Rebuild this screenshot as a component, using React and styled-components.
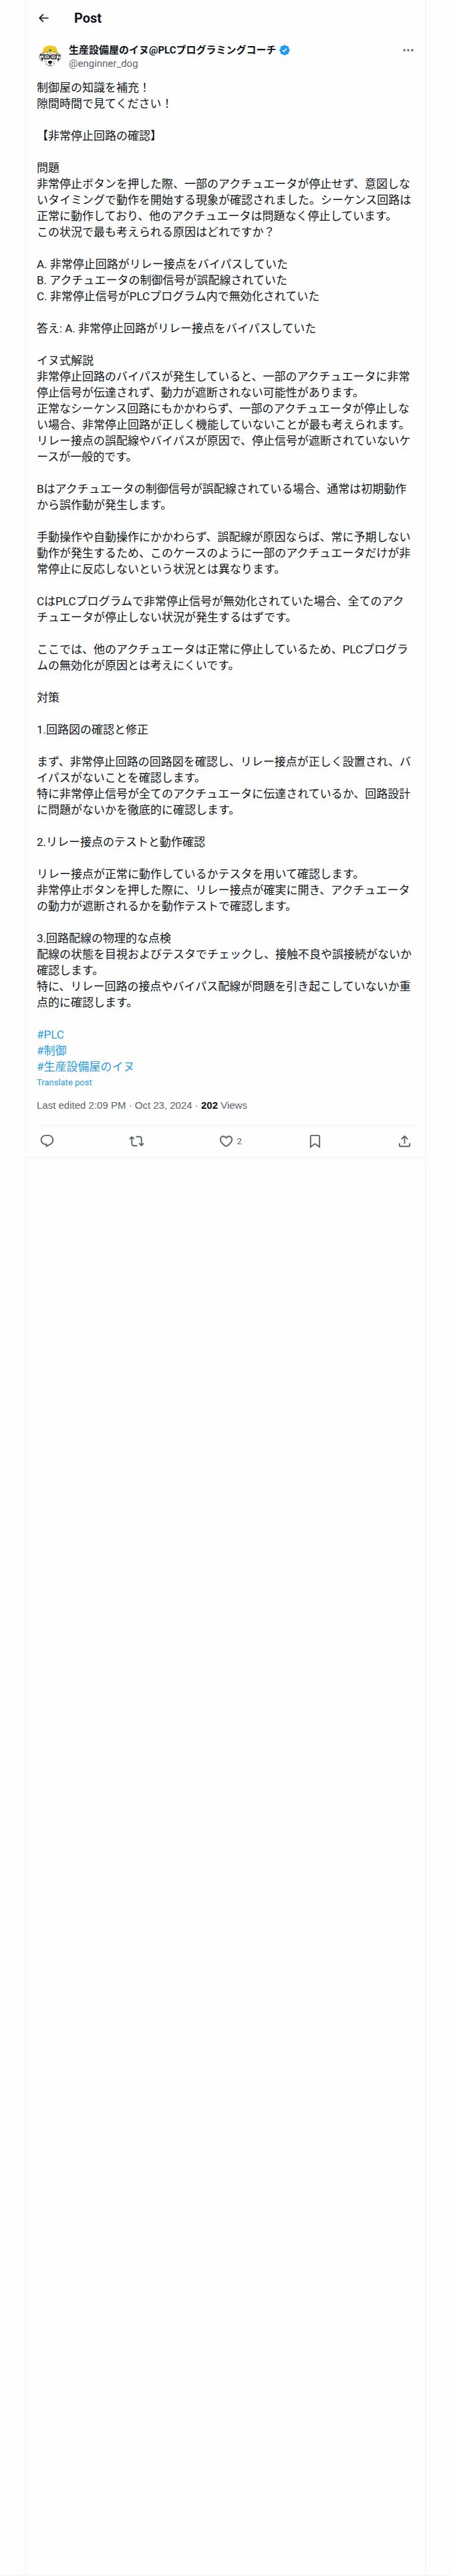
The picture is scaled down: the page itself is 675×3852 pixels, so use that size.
import React from "react";
import styled, { createGlobalStyle } from "styled-components";

const muted = "#5a646a";
const accent = "#2a9bdd";
const line = "#eff2f3";

const GlobalStyle = createGlobalStyle`
  *, *::before, *::after { box-sizing: border-box; }
  body {
    margin: 0;
    background: #fefefe;
    color: #0f1419;
    font-family: Roboto, "Noto Sans CJK JP", sans-serif;
    font-size: 15px;
    line-height: 20px;
  }
`;

const Page = styled.div`
  display: flex;
  min-height: 100vh;
  padding: 0 37px 0 38px;
  border-bottom: 2px solid #f7f7f7;
`;

const Column = styled.main`
  flex: 1;
  min-width: 0;
  border: solid ${line};
  border-width: 0 1px;
`;

const Header = styled.header`
  display: flex;
  align-items: center;
  gap: 36px;
  height: 53px;
  padding: 0 16px;
`;

const IconButton = styled.button`
  display: flex;
  align-items: center;
  gap: 5px;
  padding: 0;
  border: 0;
  background: none;
  color: ${(p) => p.$color || muted};
  font: inherit;
  font-size: 13px;
  cursor: pointer;
`;

const ActionButton = styled(IconButton)`
  width: 23px;
  white-space: nowrap;
`;

const Icon = styled.svg`
  display: block;
  flex: none;
  width: ${(p) => p.$size}px;
  height: ${(p) => p.$size}px;
  fill: currentColor;
`;

const Title = styled.h1`
  margin: 0;
  font-size: 20px;
  line-height: 24px;
  font-weight: 700;
`;

const Article = styled.article`
  padding: 12px 16px 0;
  border-bottom: 1px solid ${line};
`;

const Author = styled.div`
  display: flex;
  align-items: flex-start;
  gap: 8px;
`;

const Avatar = styled.svg`
  flex: none;
  width: 40px;
  height: 40px;
`;

const Names = styled.div`
  flex: 1;
  min-width: 0;
`;

const NameLink = styled.a`
  display: flex;
  align-items: center;
  gap: 3px;
  color: inherit;
  font-weight: 700;
  text-decoration: none;
`;

const Badge = styled(Icon)`
  color: #1d9bf0;
`;

const Handle = styled.a`
  display: block;
  color: ${muted};
  text-decoration: none;
`;

const Body = styled.div`
  margin-top: 14px;
  font-size: 17px;
  line-height: 24px;
  white-space: pre-wrap;
  overflow-wrap: break-word;
`;

const Tag = styled.a`
  color: ${accent};
  text-decoration: none;
`;

const Translate = styled.button`
  display: block;
  padding: 4px 0 0;
  border: 0;
  background: none;
  color: ${accent};
  font: inherit;
  font-size: 13px;
  line-height: 16px;
  cursor: pointer;
`;

const Meta = styled.div`
  margin: 16px 0 19px;
  color: ${muted};
  font-family: "Liberation Sans", sans-serif;

  strong { color: #0f1419; font-weight: 700; }
`;

const Actions = styled.div`
  display: flex;
  align-items: center;
  justify-content: space-between;
  height: 48px;
  padding: 0 4px;
  border-top: 1px solid ${line};
`;

const paths = {
  back: "M7.414 13l5.043 5.04-1.414 1.42L3.586 12l7.457-7.46 1.414 1.42L7.414 11H21v2H7.414z",
  more: "M3 12c0-1.1.9-2 2-2s2 .9 2 2-.9 2-2 2-2-.9-2-2zm9 2c1.1 0 2-.9 2-2s-.9-2-2-2-2 .9-2 2 .9 2 2 2zm7 0c1.1 0 2-.9 2-2s-.9-2-2-2-2 .9-2 2 .9 2 2 2z",
  verified: "M20.396 11c-.018-.646-.215-1.275-.57-1.816-.354-.54-.852-.972-1.438-1.246.223-.607.27-1.264.14-1.897-.131-.634-.437-1.218-.882-1.687-.47-.445-1.053-.75-1.687-.882-.633-.13-1.29-.083-1.897.14-.273-.587-.704-1.086-1.245-1.44S11.647 1.62 11 1.604c-.646.017-1.273.213-1.813.568s-.969.854-1.24 1.44c-.608-.223-1.267-.272-1.902-.14-.635.13-1.22.436-1.69.882-.445.47-.749 1.055-.878 1.688-.13.633-.08 1.29.144 1.896-.587.274-1.087.705-1.443 1.245-.356.54-.555 1.17-.574 1.817.02.647.218 1.276.574 1.817.356.54.856.972 1.443 1.245-.224.606-.274 1.263-.144 1.896.13.634.433 1.218.877 1.688.47.443 1.054.747 1.687.878.633.132 1.29.084 1.897-.136.274.586.705 1.084 1.246 1.439.54.354 1.17.551 1.816.569.647-.016 1.276-.213 1.817-.567s.972-.854 1.245-1.44c.604.239 1.266.296 1.903.164.636-.132 1.22-.447 1.68-.907.46-.46.776-1.044.908-1.681s.075-1.299-.165-1.903c.586-.274 1.084-.705 1.439-1.246.354-.54.551-1.17.569-1.816zM9.662 14.85l-3.429-3.428 1.293-1.302 2.072 2.072 4.4-4.794 1.347 1.246z",
  reply: "M1.751 10c0-4.42 3.584-8 8.005-8h4.366c4.49 0 8.129 3.64 8.129 8.13 0 2.96-1.607 5.68-4.196 7.11l-8.054 4.46v-3.69h-.067c-4.49.1-8.183-3.51-8.183-8.01zm8.005-6c-3.317 0-6.005 2.69-6.005 6 0 3.37 2.77 6.08 6.138 6.01l.351-.01h1.761v2.3l5.087-2.81c1.951-1.08 3.163-3.13 3.163-5.36 0-3.39-2.744-6.13-6.129-6.13H9.756z",
  repost: "M4.5 3.88l4.432 4.14-1.364 1.46L5.5 7.55V16c0 1.1.896 2 2 2H13v2H7.5c-2.209 0-4-1.79-4-4V7.55L1.432 9.48.068 8.02 4.5 3.88zM16.5 6H11V4h5.5c2.209 0 4 1.79 4 4v8.45l2.068-1.93 1.364 1.46-4.432 4.14-4.432-4.14 1.364-1.46 2.068 1.93V8c0-1.1-.896-2-2-2z",
  like: "M16.697 5.5c-1.222-.06-2.679.51-3.89 2.16l-.805 1.09-.806-1.09C9.984 6.01 8.526 5.44 7.304 5.5c-1.243.07-2.349.78-2.91 1.91-.552 1.12-.633 2.78.479 4.82 1.074 1.97 3.257 4.27 7.129 6.61 3.87-2.34 6.052-4.64 7.126-6.61 1.111-2.04 1.03-3.7.477-4.82-.561-1.13-1.666-1.84-2.908-1.91zm4.187 7.69c-1.351 2.48-4.001 5.12-8.379 7.67l-.503.3-.504-.3c-4.379-2.55-7.029-5.19-8.382-7.67-1.36-2.5-1.41-4.86-.514-6.67.887-1.79 2.647-2.91 4.601-3.01 1.651-.09 3.368.56 4.798 2.01 1.429-1.45 3.146-2.1 4.796-2.01 1.954.1 3.714 1.22 4.601 3.01.896 1.81.846 4.17-.514 6.67z",
  bookmark: "M4 4.5C4 3.12 5.119 2 6.5 2h11C18.881 2 20 3.12 20 4.5v18.44l-8-5.71-8 5.71V4.5zM6.5 4c-.276 0-.5.22-.5.5v14.56l6-4.29 6 4.29V4.5c0-.28-.224-.5-.5-.5h-11z",
  share: "M12 2.59l5.7 5.7-1.41 1.42L13 6.41V16h-2V6.41l-3.3 3.3-1.41-1.42L12 2.59zM21 15l-.02 3.51c0 1.38-1.12 2.49-2.5 2.49H5.5C4.11 21 3 19.88 3 18.5V15h2v3.5c0 .28.22.5.5.5h12.98c.28 0 .5-.22.5-.5L19 15h2z",
};

const Glyph = ({ name, size }) => (
  <Icon $size={size} viewBox="0 0 24 24" aria-hidden="true">
    <path d={paths[name]} />
  </Icon>
);

const DogAvatar = () => (
  <Avatar viewBox="0 0 40 40" role="img" aria-label="生産設備屋のイヌ">
    <circle cx="20" cy="20" r="20" fill="#fff" />
    <path d="M10 15 Q4 14 4 19 Q4 24 8 27 L11 20zM30 15 Q36 14 36 19 Q36 24 32 27 L29 20z" fill="#e8e8e8" stroke="#444" strokeWidth=".7" />
    <path d="M5 17l2-1v3zM7 21l2 1-1 3zM33 17l2 1-2 2zM32 22l2 1-2 2z" fill="#222" stroke="#222" />
    <path d="M10 14 H30 L28 26 Q26 34 20 35 Q14 34 12 26z" fill="#fafafa" stroke="#aaa" strokeWidth=".6" />
    <path d="M9 13 Q9 3 20 3 Q31 3 31 13 Q20 9 9 13z" fill="#efc82a" />
    <path d="M8 13 Q20 8 32 13 L31 15 Q20 11 9 15z" fill="#d9b520" />
    <circle cx="20" cy="10" r="1.8" fill="#3e8b35" />
    <g fill="#ddd" stroke="#222" strokeWidth="1.5">
      <rect x="11" y="17" width="8" height="6" rx="2" />
      <rect x="21" y="17" width="8" height="6" rx="2" />
      <path d="M8 17h3M29 17h3M19 19h2" fill="none" />
    </g>
    <path d="M13 20h4M23 20h4" stroke="#555" strokeWidth="1.5" />
    <ellipse cx="20" cy="28" rx="3" ry="2.3" fill="#151515" />
    <path d="M20 30v3M17 33q3-1 6 0" fill="none" stroke="#555" />
    <g fill="#444">
      <circle cx="14" cy="27" r=".8" /><circle cx="25" cy="27" r=".7" />
      <circle cx="15" cy="31" r=".8" /><circle cx="26" cy="30" r=".8" />
      <circle cx="20" cy="15" r=".8" /><circle cx="16" cy="14" r=".7" />
    </g>
  </Avatar>
);

const text = `制御屋の知識を補充！
隙間時間で見てください！

【非常停止回路の確認】

問題
非常停止ボタンを押した際、一部のアクチュエータが停止せず、意図しないタイミングで動作を開始する現象が確認されました。シーケンス回路は正常に動作しており、他のアクチュエータは問題なく停止しています。
この状況で最も考えられる原因はどれですか？

A. 非常停止回路がリレー接点をバイパスしていた
B. アクチュエータの制御信号が誤配線されていた
C. 非常停止信号がPLCプログラム内で無効化されていた

答え: A. 非常停止回路がリレー接点をバイパスしていた

イヌ式解説
非常停止回路のバイパスが発生していると、一部のアクチュエータに非常停止信号が伝達されず、動力が遮断されない可能性があります。
正常なシーケンス回路にもかかわらず、一部のアクチュエータが停止しない場合、非常停止回路が正しく機能していないことが最も考えられます。
リレー接点の誤配線やバイパスが原因で、停止信号が遮断されていないケースが一般的です。

Bはアクチュエータの制御信号が誤配線されている場合、通常は初期動作から誤作動が発生します。

手動操作や自動操作にかかわらず、誤配線が原因ならば、常に予期しない動作が発生するため、このケースのように一部のアクチュエータだけが非常停止に反応しないという状況とは異なります。

CはPLCプログラムで非常停止信号が無効化されていた場合、全てのアクチュエータが停止しない状況が発生するはずです。

ここでは、他のアクチュエータは正常に停止しているため、PLCプログラムの無効化が原因とは考えにくいです。

対策

1.回路図の確認と修正

まず、非常停止回路の回路図を確認し、リレー接点が正しく設置され、バイパスがないことを確認します。
特に非常停止信号が全てのアクチュエータに伝達されているか、回路設計に問題がないかを徹底的に確認します。

2.リレー接点のテストと動作確認

リレー接点が正常に動作しているかテスタを用いて確認します。
非常停止ボタンを押した際に、リレー接点が確実に開き、アクチュエータの動力が遮断されるかを動作テストで確認します。

3.回路配線の物理的な点検
配線の状態を目視およびテスタでチェックし、接触不良や誤接続がないか確認します。
特に、リレー回路の接点やバイパス配線が問題を引き起こしていないか重点的に確認します。

`;

const tags = ["#PLC", "#制御", "#生産設備屋のイヌ"];

const actions = [
  { name: "reply", label: "Reply" },
  { name: "repost", label: "Repost" },
  { name: "like", label: "Like", count: 2 },
  { name: "bookmark", label: "Bookmark" },
  { name: "share", label: "Share" },
];

export default function App() {
  return (
    <>
      <GlobalStyle />
      <Page>
        <Column>
          <Header>
            <IconButton $color="#0f1419" aria-label="Back"><Glyph name="back" size={20} /></IconButton>
            <Title>Post</Title>
          </Header>
          <Article>
            <Author>
              <DogAvatar />
              <Names>
                <NameLink href="#profile">
                  生産設備屋のイヌ@PLCプログラミングコーチ
                  <Badge $size={18} viewBox="0 0 22 22" role="img" aria-label="Verified account">
                    <path d={paths.verified} />
                  </Badge>
                </NameLink>
                <Handle href="#profile">@enginner_dog</Handle>
              </Names>
              <IconButton aria-label="More"><Glyph name="more" size={20} /></IconButton>
            </Author>
            <Body>
              {text}
              {tags.map((tag, i) => (
                <React.Fragment key={tag}>
                  {i > 0 && "\n"}
                  <Tag href="#tag">{tag}</Tag>
                </React.Fragment>
              ))}
            </Body>
            <Translate>Translate post</Translate>
            <Meta>Last edited 2:09 PM · Oct 23, 2024 · <strong>202</strong> Views</Meta>
            <Actions>
              {actions.map(({ name, label, count }) => (
                <ActionButton key={name} aria-label={label}>
                  <Glyph name={name} size={23} />
                  {count}
                </ActionButton>
              ))}
            </Actions>
          </Article>
        </Column>
      </Page>
    </>
  );
}
